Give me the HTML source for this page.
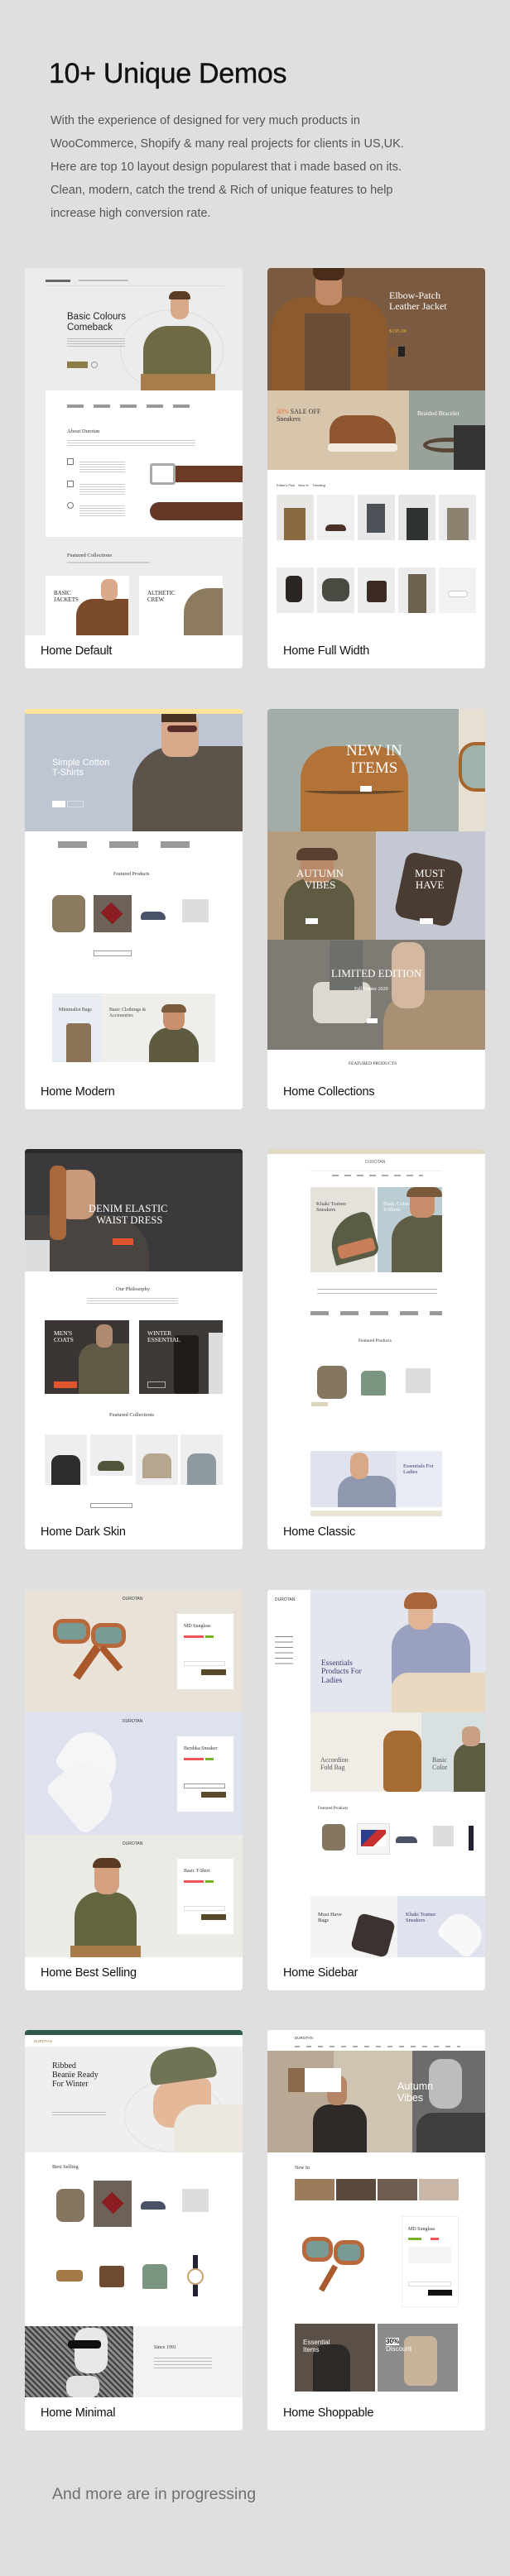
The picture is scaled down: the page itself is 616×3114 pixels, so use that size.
<!DOCTYPE html>
<html><head><meta charset="utf-8"><style>
*{margin:0;padding:0;box-sizing:border-box}
body{width:616px;height:3114px;background:#dfdfdf;font-family:"Liberation Sans",sans-serif;position:relative;overflow:hidden}
.h1{position:absolute;left:59px;top:70px;font-size:34px;color:#111;-webkit-text-stroke:0.4px #111;letter-spacing:-0.3px}
.p{position:absolute;left:61px;top:132px;font-size:14.5px;line-height:28px;color:#555;white-space:nowrap}
.more{position:absolute;left:63px;top:3004px;font-size:19.5px;color:#6f6f6f}
.card{position:absolute;width:263px;height:484px;background:#fff;border-radius:4px;overflow:hidden}
.shot{position:absolute;left:0;top:0;width:263px;height:444px;overflow:hidden}
.cap{position:absolute;left:19px;top:455px;font-size:14.5px;color:#111;letter-spacing:-0.2px}
i{position:absolute;display:block;font-style:normal}
.t{position:absolute;font-family:"Liberation Serif",serif;line-height:1.1;white-space:nowrap}
.s{position:absolute;font-size:4px;color:#999;white-space:nowrap}
</style></head><body>
<div class="h1">10+ Unique Demos</div>
<div class="p">With the experience of designed for very much products in<br>WooCommerce, Shopify &amp; many real projects for clients in US,UK.<br>Here are top 10 layout design popularest that i made based on its.<br>Clean, modern, catch the trend &amp; Rich of unique features to help<br>increase high conversion rate.</div>

<!-- Card 1 Home Default -->
<div class="card" style="left:30px;top:324px"><div class="shot" style="background:#ececec">
<i style="left:25px;top:14px;width:30px;height:3px;background:#666"></i>
<i style="left:65px;top:14px;width:60px;height:2px;background:#bbb"></i>
<i style="left:25px;top:21px;width:215px;height:1px;background:#ddd"></i>
<i style="left:115px;top:50px;width:125px;height:100px;border:1px solid #ddd;border-radius:50%"></i>
<i style="left:143px;top:70px;width:82px;height:78px;background:#6e6a44;border-radius:30px 30px 0 0"></i>
<i style="left:176px;top:30px;width:22px;height:32px;background:#d9a98a;border-radius:10px"></i>
<i style="left:174px;top:28px;width:26px;height:10px;background:#5a3b25;border-radius:8px 8px 2px 2px"></i>
<i style="left:140px;top:128px;width:90px;height:20px;background:#a77d4a"></i>
<div class="t" style="left:51px;top:53px;font-size:11.5px;color:#222;font-family:'Liberation Sans Narrow','Liberation Sans',sans-serif">Basic Colours<br>Comeback</div>
<i style="left:51px;top:83px;width:70px;height:12px;background:repeating-linear-gradient(#ececec 0 2px,#bbb 2px 3px)"></i>
<i style="left:51px;top:113px;width:25px;height:8px;background:#8a7d45"></i>
<i style="left:80px;top:113px;width:8px;height:8px;border:1px solid #999;border-radius:50%"></i>
<i style="left:25px;top:148px;width:238px;height:177px;background:#fff"></i>
<i style="left:51px;top:165px;width:160px;height:4px;background:repeating-linear-gradient(90deg,#999 0 20px,#fff 20px 32px)"></i>
<div class="t" style="left:51px;top:194px;font-size:6.5px;color:#333">About Durotan</div>
<i style="left:51px;top:206px;width:155px;height:10px;background:repeating-linear-gradient(#fff 0 2px,#ccc 2px 3px)"></i>
<i style="left:51px;top:230px;width:8px;height:8px;border:1px solid #777"></i>
<i style="left:51px;top:257px;width:8px;height:8px;border:1px solid #777"></i>
<i style="left:51px;top:283px;width:8px;height:8px;border:1px solid #777;border-radius:50%"></i>
<i style="left:66px;top:232px;width:55px;height:15px;background:repeating-linear-gradient(#fff 0 2px,#ccc 2px 3px)"></i>
<i style="left:66px;top:259px;width:55px;height:15px;background:repeating-linear-gradient(#fff 0 2px,#ccc 2px 3px)"></i>
<i style="left:66px;top:285px;width:55px;height:15px;background:repeating-linear-gradient(#fff 0 2px,#ccc 2px 3px)"></i>
<i style="left:151px;top:236px;width:31px;height:26px;border:3px solid #aaa;border-radius:3px"></i>
<i style="left:182px;top:239px;width:81px;height:20px;background:#6b3b26"></i>
<i style="left:151px;top:283px;width:112px;height:22px;background:#643727;border-radius:12px 0 0 12px"></i>
<div class="t" style="left:51px;top:344px;font-size:6.5px;color:#333">Featured Collections</div>
<i style="left:51px;top:355px;width:100px;height:2px;background:#ccc"></i>
<i style="left:25px;top:372px;width:101px;height:72px;background:#fff"></i>
<i style="left:138px;top:372px;width:101px;height:72px;background:#fff"></i>
<i style="left:62px;top:400px;width:63px;height:44px;background:#7a4a2b;border-radius:20px 0 0 0"></i>
<i style="left:92px;top:376px;width:20px;height:26px;background:#d9a98a;border-radius:8px"></i>
<i style="left:192px;top:387px;width:47px;height:57px;background:#8c7b5e;border-radius:30px 0 0 0"></i>
<div class="t" style="left:35px;top:390px;font-size:7px;color:#222">BASIC<br>JACKETS</div>
<div class="t" style="left:148px;top:390px;font-size:7px;color:#222">ALTHETIC<br>CREW</div>
</div><div class="cap">Home Default</div></div>

<!-- Card 2 Home Full Width -->
<div class="card" style="left:323px;top:324px"><div class="shot" style="background:#fff">
<i style="left:0;top:0;width:263px;height:148px;background:#7a5a40"></i>
<i style="left:5px;top:35px;width:140px;height:113px;background:#8b5a2e;border-radius:40px 40px 0 0"></i>
<i style="left:45px;top:55px;width:55px;height:93px;background:#6b4e38"></i>
<i style="left:58px;top:5px;width:32px;height:40px;background:#c08a66;border-radius:12px"></i>
<i style="left:55px;top:0;width:38px;height:15px;background:#4a2c1a;border-radius:0 0 10px 10px"></i>
<div class="t" style="left:147px;top:27px;font-size:12px;color:#fff">Elbow-Patch<br>Leather Jacket</div>
<div class="t" style="left:147px;top:73px;font-size:6.5px;color:#f2b233">$195.00</div>
<i style="left:147px;top:95px;width:8px;height:12px;background:#8b5a2e"></i>
<i style="left:158px;top:95px;width:8px;height:12px;background:#222"></i>
<i style="left:0;top:148px;width:171px;height:96px;background:#d8c6ac"></i>
<i style="left:171px;top:148px;width:92px;height:96px;background:#98a29a"></i>
<div class="t" style="left:11px;top:170px;font-size:8px;color:#333"><span style="color:#e8703a">30%</span> SALE OFF<br>Sneakers</div>
<i style="left:75px;top:178px;width:80px;height:40px;background:#8f5630;border-radius:20px 30px 6px 6px"></i>
<i style="left:73px;top:212px;width:84px;height:10px;background:#f2ece0;border-radius:4px"></i>
<div class="t" style="left:181px;top:172px;font-size:7.5px;color:#fff">Braided Bracelet</div>
<i style="left:188px;top:205px;width:60px;height:18px;border:5px solid #5a4636;border-radius:50%"></i>
<i style="left:225px;top:190px;width:38px;height:54px;background:#333"></i>
<div class="s" style="left:11px;top:260px;color:#333">Editor's Pick &nbsp;&nbsp; New In &nbsp;&nbsp; Trending</div>
<i style="left:11px;top:274px;width:45px;height:55px;background:#e8e6e2"></i>
<i style="left:60px;top:274px;width:45px;height:55px;background:#f0f0f0"></i>
<i style="left:109px;top:274px;width:45px;height:55px;background:#e8e8e8"></i>
<i style="left:158px;top:274px;width:45px;height:55px;background:#e6e6e6"></i>
<i style="left:207px;top:274px;width:45px;height:55px;background:#ebebeb"></i>
<i style="left:20px;top:290px;width:26px;height:39px;background:#8a6a3e"></i>
<i style="left:70px;top:310px;width:25px;height:8px;background:#4a3326;border-radius:6px 6px 2px 2px"></i>
<i style="left:120px;top:285px;width:22px;height:35px;background:#4d5258"></i>
<i style="left:168px;top:290px;width:26px;height:39px;background:#2e3330"></i>
<i style="left:217px;top:290px;width:26px;height:39px;background:#8d8270"></i>
<i style="left:11px;top:362px;width:45px;height:55px;background:#ececec"></i>
<i style="left:60px;top:362px;width:45px;height:55px;background:#ececec"></i>
<i style="left:109px;top:362px;width:45px;height:55px;background:#ececec"></i>
<i style="left:158px;top:362px;width:45px;height:55px;background:#ebebeb"></i>
<i style="left:207px;top:362px;width:45px;height:55px;background:#f2f2f2"></i>
<i style="left:22px;top:372px;width:20px;height:32px;background:#2a2522;border-radius:6px"></i>
<i style="left:66px;top:375px;width:33px;height:28px;background:#4b4a42;border-radius:10px"></i>
<i style="left:120px;top:378px;width:24px;height:26px;background:#3c2a24;border-radius:3px"></i>
<i style="left:170px;top:370px;width:22px;height:47px;background:#6f6150"></i>
<i style="left:218px;top:390px;width:24px;height:8px;background:#fff;border:1px solid #ccc;border-radius:4px"></i>
</div><div class="cap">Home Full Width</div></div>

<!-- Card 3 Home Modern -->
<div class="card" style="left:30px;top:857px"><div class="shot" style="background:#fff">
<i style="left:0;top:0;width:263px;height:6px;background:#fde49a"></i>
<i style="left:0;top:6px;width:263px;height:142px;background:#bfc6d3"></i>
<i style="left:130px;top:45px;width:133px;height:103px;background:#5c534b;border-radius:50px 0 0 0"></i>
<i style="left:165px;top:6px;width:45px;height:52px;background:#d8a88a;border-radius:12px"></i>
<i style="left:165px;top:6px;width:42px;height:10px;background:#4a3222"></i>
<i style="left:172px;top:20px;width:36px;height:8px;background:#5a2e28;border-radius:4px"></i>
<div class="t" style="left:33px;top:59px;font-size:11px;color:#fff;font-family:'Liberation Sans',sans-serif">Simple Cotton<br>T-Shirts</div>
<i style="left:33px;top:111px;width:16px;height:8px;background:#fff"></i>
<i style="left:51px;top:111px;width:20px;height:8px;border:1px solid #dde"></i>
<i style="left:40px;top:160px;width:180px;height:8px;background:repeating-linear-gradient(90deg,#999 0 35px,#fff 35px 62px)"></i>
<div class="t" style="left:107px;top:197px;font-size:6px;color:#333">Featured Products</div>
<i style="left:33px;top:225px;width:40px;height:45px;background:#8a7a60;border-radius:8px"></i>
<i style="left:83px;top:225px;width:46px;height:45px;background:#6d6158"></i>
<i style="left:95px;top:238px;width:20px;height:18px;background:#8a1c22;transform:rotate(45deg)"></i>
<i style="left:140px;top:245px;width:30px;height:10px;background:#4a5268;border-radius:6px 8px 2px 2px"></i>
<i style="left:190px;top:230px;width:32px;height:28px;background:#ddd"></i>
<i style="left:83px;top:292px;width:46px;height:7px;border:1px solid #999"></i>
<i style="left:33px;top:344px;width:61px;height:83px;background:#e8edf4"></i>
<i style="left:94px;top:344px;width:136px;height:83px;background:#efeeea"></i>
<i style="left:50px;top:380px;width:30px;height:47px;background:#8a7356;border-radius:4px 4px 0 0"></i>
<i style="left:150px;top:385px;width:60px;height:42px;background:#5d5a40;border-radius:25px 25px 0 0"></i>
<i style="left:167px;top:360px;width:26px;height:28px;background:#c8906c;border-radius:10px"></i>
<i style="left:165px;top:357px;width:30px;height:10px;background:#7a5a3a;border-radius:8px 8px 2px 2px"></i>
<div class="t" style="left:41px;top:361px;font-size:6px;color:#444">Minimalist Bags</div>
<div class="t" style="left:102px;top:361px;font-size:6px;color:#444">Basic Clothings &amp;<br>Accessories</div>
</div><div class="cap">Home Modern</div></div>

<!-- Card 4 Home Collections -->
<div class="card" style="left:323px;top:857px"><div class="shot" style="background:#fff">
<i style="left:0;top:0;width:231px;height:148px;background:#a3ada8"></i>
<i style="left:231px;top:0;width:32px;height:148px;background:#e6dfd2"></i>
<i style="left:231px;top:40px;width:32px;height:60px;border:4px solid #a7652c;border-right:none;border-radius:20px 0 0 20px;background:#9fb3ad"></i>
<i style="left:40px;top:45px;width:130px;height:103px;background:#b27238;border-radius:40px 40px 0 0"></i>
<i style="left:45px;top:95px;width:120px;height:8px;border-bottom:4px solid #6b4a2a;border-radius:50%"></i>
<div class="t" style="left:95px;top:41px;font-size:19px;color:#fff;text-align:center">NEW IN<br>ITEMS</div>
<i style="left:112px;top:93px;width:14px;height:7px;background:#fff"></i>
<i style="left:0;top:148px;width:131px;height:131px;background:#b59c7e"></i>
<i style="left:131px;top:148px;width:132px;height:131px;background:#c3c8d3"></i>
<i style="left:20px;top:205px;width:85px;height:74px;background:#5f5a42;border-radius:30px 30px 0 0"></i>
<i style="left:40px;top:170px;width:40px;height:40px;background:#b88a6a;border-radius:12px"></i>
<i style="left:35px;top:168px;width:50px;height:15px;background:#5a4030;border-radius:10px 10px 3px 3px"></i>
<i style="left:160px;top:178px;width:70px;height:80px;background:#4a3c33;border-radius:12px;transform:rotate(12deg)"></i>
<div class="t" style="left:35px;top:192px;font-size:13px;color:#fff;text-align:center">AUTUMN<br>VIBES</div>
<div class="t" style="left:178px;top:192px;font-size:13px;color:#fff;text-align:center">MUST<br>HAVE</div>
<i style="left:46px;top:253px;width:15px;height:7px;background:#fff"></i>
<i style="left:184px;top:253px;width:16px;height:7px;background:#fff"></i>
<i style="left:0;top:279px;width:263px;height:133px;background:#7e7b74"></i>
<i style="left:55px;top:330px;width:70px;height:50px;background:#ddd8d0;border-radius:10px"></i>
<i style="left:140px;top:340px;width:123px;height:72px;background:#a98f74;border-radius:40px 0 0 0"></i>
<i style="left:150px;top:282px;width:40px;height:80px;background:#d5b8a0;border-radius:15px"></i>
<i style="left:75px;top:280px;width:40px;height:60px;background:#6e6e6a"></i>
<div class="t" style="left:77px;top:313px;font-size:13px;color:#fff">LIMITED EDITION</div>
<div class="t" style="left:105px;top:336px;font-size:6px;color:#fff">Fall Winter 2020</div>
<i style="left:120px;top:374px;width:13px;height:6px;background:#fff"></i>
<div class="t" style="left:98px;top:426px;font-size:5.5px;color:#333">FEATURED PRODUCTS</div>
</div><div class="cap">Home Collections</div></div>

<!-- Card 5 Home Dark Skin -->
<div class="card" style="left:30px;top:1389px"><div class="shot" style="background:#fff">
<i style="left:0;top:0;width:263px;height:148px;background:#3a3a3c"></i>
<i style="left:0;top:0;width:263px;height:5px;background:#2a2a2a"></i>
<i style="left:0;top:80px;width:150px;height:68px;background:#4a4440;border-radius:0 50px 0 0"></i>
<i style="left:40px;top:25px;width:45px;height:60px;background:#c89a7a;border-radius:14px"></i>
<i style="left:30px;top:20px;width:20px;height:90px;background:#a8683a;border-radius:8px"></i>
<i style="left:0;top:110px;width:30px;height:38px;background:#ddd"></i>
<div class="t" style="left:77px;top:66px;font-size:12.5px;color:#fff;text-align:center">DENIM ELASTIC<br>&nbsp;WAIST DRESS</div>
<i style="left:106px;top:108px;width:25px;height:8px;background:#e0552e"></i>
<div class="t" style="left:110px;top:166px;font-size:6.5px;color:#333">Our Philosophy</div>
<i style="left:75px;top:178px;width:110px;height:9px;background:repeating-linear-gradient(#fff 0 2px,#ccc 2px 3px)"></i>
<i style="left:24px;top:207px;width:102px;height:89px;background:#3b3633"></i>
<i style="left:138px;top:207px;width:101px;height:89px;background:#3e3a37"></i>
<i style="left:65px;top:235px;width:61px;height:61px;background:#5e5a45;border-radius:20px 0 0 0"></i>
<i style="left:86px;top:212px;width:20px;height:28px;background:#b08a6e;border-radius:8px"></i>
<i style="left:180px;top:225px;width:30px;height:71px;background:#1f1c1a;border-radius:4px"></i>
<i style="left:222px;top:222px;width:17px;height:74px;background:#ddd"></i>
<div class="t" style="left:35px;top:219px;font-size:7.5px;color:#fff">MEN'S<br>COATS</div>
<div class="t" style="left:148px;top:219px;font-size:7.5px;color:#fff">WINTER<br>ESSENTIAL</div>
<i style="left:35px;top:281px;width:28px;height:8px;background:#e0552e"></i>
<i style="left:148px;top:281px;width:22px;height:8px;border:1px solid #aaa"></i>
<div class="t" style="left:102px;top:318px;font-size:6.5px;color:#333">Featured Collections</div>
<i style="left:24px;top:345px;width:51px;height:61px;background:#eee"></i>
<i style="left:79px;top:345px;width:51px;height:50px;background:#eee"></i>
<i style="left:134px;top:345px;width:51px;height:61px;background:#eee"></i>
<i style="left:188px;top:345px;width:51px;height:61px;background:#eee"></i>
<i style="left:32px;top:370px;width:35px;height:36px;background:#2c2c2c;border-radius:10px 10px 0 0"></i>
<i style="left:88px;top:377px;width:32px;height:12px;background:#4e5538;border-radius:8px 8px 3px 3px"></i>
<i style="left:142px;top:368px;width:35px;height:30px;background:#b6a68e;border-radius:10px 10px 0 0"></i>
<i style="left:196px;top:368px;width:35px;height:38px;background:#8f9aa0;border-radius:10px 10px 0 0"></i>
<i style="left:79px;top:428px;width:51px;height:6px;border:1px solid #999"></i>
</div><div class="cap">Home Dark Skin</div></div>

<!-- Card 6 Home Classic -->
<div class="card" style="left:323px;top:1389px"><div class="shot" style="background:#fff">
<i style="left:0;top:0;width:263px;height:6px;background:#e0d9c5"></i>
<div class="s" style="left:118px;top:13px;font-size:5px;color:#666">DUROTAN</div>
<i style="left:52px;top:26px;width:159px;height:1px;background:#eee"></i>
<i style="left:78px;top:31px;width:110px;height:2px;background:repeating-linear-gradient(90deg,#aaa 0 8px,#fff 8px 15px)"></i>
<i style="left:52px;top:46px;width:78px;height:103px;background:#e5e2dc"></i>
<i style="left:133px;top:46px;width:78px;height:103px;background:#b9cdd2"></i>
<i style="left:75px;top:80px;width:55px;height:55px;background:#5a5d45;border-radius:40px 10px 10px 0;transform:rotate(-15deg)"></i>
<i style="left:85px;top:112px;width:45px;height:16px;background:#c97e5a;border-radius:4px;transform:rotate(-15deg)"></i>
<i style="left:150px;top:80px;width:61px;height:69px;background:#5f5d45;border-radius:30px 0 0 0"></i>
<i style="left:172px;top:48px;width:30px;height:35px;background:#c88e6c;border-radius:10px"></i>
<i style="left:168px;top:46px;width:43px;height:12px;background:#7a5a3a;border-radius:12px 12px 2px 2px"></i>
<div class="t" style="left:59px;top:63px;font-size:6.5px;color:#444">Khaki Trainer<br>Sneakers</div>
<div class="t" style="left:140px;top:63px;font-size:6.5px;color:#fff">Basic Color<br>T-Shirts</div>
<i style="left:60px;top:165px;width:145px;height:14px;background:repeating-linear-gradient(#fff 0 4px,#bbb 4px 5px)"></i>
<i style="left:52px;top:196px;width:159px;height:5px;background:repeating-linear-gradient(90deg,#999 0 22px,#fff 22px 36px)"></i>
<div class="t" style="left:110px;top:229px;font-size:5.5px;color:#333">Featured Products</div>
<i style="left:60px;top:262px;width:36px;height:40px;background:#857660;border-radius:8px"></i>
<i style="left:113px;top:268px;width:30px;height:30px;background:#7a9680;border-radius:6px 6px 2px 2px"></i>
<i style="left:167px;top:265px;width:30px;height:30px;background:#ddd"></i>
<i style="left:53px;top:306px;width:20px;height:5px;background:#ddd3b8"></i>
<i style="left:52px;top:365px;width:104px;height:68px;background:#dfe3ee"></i>
<i style="left:156px;top:365px;width:55px;height:68px;background:#e8ebf4"></i>
<i style="left:85px;top:395px;width:70px;height:38px;background:#9098b0;border-radius:20px 20px 0 0"></i>
<i style="left:100px;top:367px;width:22px;height:32px;background:#d8a888;border-radius:10px"></i>
<div class="t" style="left:164px;top:380px;font-size:6.5px;color:#3a3a70">Essentials For<br>Ladies</div>
<i style="left:52px;top:437px;width:159px;height:7px;background:#ebe5d8"></i>
</div><div class="cap">Home Classic</div></div>

<!-- Card 7 Home Best Selling -->
<div class="card" style="left:30px;top:1922px"><div class="shot" style="background:#fff">
<i style="left:0;top:0;width:263px;height:148px;background:#e9e2d9"></i>
<i style="left:0;top:148px;width:263px;height:148px;background:#dde2ee"></i>
<i style="left:0;top:296px;width:263px;height:148px;background:#ebebe6"></i>
<div class="s" style="left:118px;top:8px;font-size:5px;color:#333">DUROTAN</div>
<div class="s" style="left:118px;top:156px;font-size:5px;color:#333">DUROTAN</div>
<div class="s" style="left:118px;top:304px;font-size:5px;color:#333">DUROTAN</div>
<i style="left:34px;top:35px;width:45px;height:30px;background:#7a9a96;border:5px solid #b7693c;border-radius:12px"></i>
<i style="left:80px;top:40px;width:42px;height:30px;background:#7a9a96;border:5px solid #b7693c;border-radius:12px"></i>
<i style="left:70px;top:65px;width:10px;height:45px;background:#a8582a;transform:rotate(35deg)"></i>
<i style="left:100px;top:65px;width:8px;height:35px;background:#a8582a;transform:rotate(-40deg)"></i>
<i style="left:184px;top:29px;width:68px;height:91px;background:#fff"></i>
<div class="t" style="left:192px;top:41px;font-size:6px;color:#333">MD Sunglass</div>
<i style="left:192px;top:55px;width:24px;height:3px;background:#e55"></i><i style="left:218px;top:55px;width:10px;height:3px;background:#7ab030"></i>
<i style="left:192px;top:86px;width:50px;height:6px;border:1px solid #ddd"></i>
<i style="left:213px;top:96px;width:30px;height:7px;background:#5a4a2a"></i>
<i style="left:45px;top:175px;width:70px;height:60px;background:#f6f6f6;border-radius:30px 40px 10px 10px;transform:rotate(35deg)"></i>
<i style="left:35px;top:215px;width:75px;height:65px;background:#f4f4f4;border-radius:30px 40px 10px 10px;transform:rotate(50deg)"></i>
<i style="left:184px;top:177px;width:68px;height:91px;background:#fff"></i>
<div class="t" style="left:192px;top:189px;font-size:6px;color:#333">Bershka Sneaker</div>
<i style="left:192px;top:203px;width:24px;height:3px;background:#e55"></i><i style="left:218px;top:203px;width:10px;height:3px;background:#7ab030"></i>
<i style="left:192px;top:234px;width:50px;height:6px;border:1px solid #999"></i>
<i style="left:213px;top:244px;width:30px;height:7px;background:#5a4a2a"></i>
<i style="left:60px;top:365px;width:75px;height:79px;background:#636540;border-radius:30px 30px 0 0"></i>
<i style="left:84px;top:326px;width:30px;height:42px;background:#d4a080;border-radius:12px"></i>
<i style="left:82px;top:324px;width:34px;height:12px;background:#5a3a24;border-radius:12px 12px 2px 2px"></i>
<i style="left:55px;top:430px;width:85px;height:14px;background:#a87a48"></i>
<i style="left:184px;top:325px;width:68px;height:91px;background:#fff"></i>
<div class="t" style="left:192px;top:337px;font-size:6px;color:#333">Basic T-Shirt</div>
<i style="left:192px;top:351px;width:24px;height:3px;background:#e55"></i><i style="left:218px;top:351px;width:10px;height:3px;background:#7ab030"></i>
<i style="left:192px;top:382px;width:50px;height:6px;border:1px solid #ddd"></i>
<i style="left:213px;top:392px;width:30px;height:7px;background:#5a4a2a"></i>
</div><div class="cap">Home Best Selling</div></div>

<!-- Card 8 Home Sidebar -->
<div class="card" style="left:323px;top:1922px"><div class="shot" style="background:#fff">
<div class="s" style="left:9px;top:9px;font-size:5px;color:#333">DUROTAN</div>
<i style="left:9px;top:52px;width:22px;height:40px;background:repeating-linear-gradient(#fff 0 4px,#888 4px 5px,#fff 5px 6.5px)"></i>
<i style="left:52px;top:0;width:211px;height:148px;background:#e3e5ef"></i>
<i style="left:150px;top:40px;width:95px;height:80px;background:#9aa0c0;border-radius:30px 30px 10px 10px"></i>
<i style="left:170px;top:8px;width:30px;height:40px;background:#e0b494;border-radius:12px"></i>
<i style="left:165px;top:3px;width:40px;height:20px;background:#a9653a;border-radius:14px 14px 4px 4px"></i>
<i style="left:150px;top:100px;width:113px;height:48px;background:#e8d8c0;border-radius:20px 0 0 0"></i>
<div class="t" style="left:65px;top:84px;font-size:9.5px;color:#3a3a70">Essentials<br>Products For<br>Ladies</div>
<i style="left:52px;top:148px;width:134px;height:96px;background:#f1ede6"></i>
<i style="left:186px;top:148px;width:77px;height:96px;background:#d8e0e1"></i>
<i style="left:140px;top:170px;width:46px;height:74px;background:#a76c34;border-radius:15px 15px 6px 6px"></i>
<i style="left:225px;top:185px;width:38px;height:59px;background:#5e5d42;border-radius:20px 0 0 0"></i>
<i style="left:235px;top:165px;width:22px;height:24px;background:#caa084;border-radius:8px"></i>
<div class="t" style="left:64px;top:202px;font-size:8px;color:#555">Accordion<br>Fold Bag</div>
<div class="t" style="left:199px;top:202px;font-size:8px;color:#555">Basic<br>Color</div>
<div class="t" style="left:61px;top:262px;font-size:5px;color:#333">Featured Products</div>
<i style="left:66px;top:283px;width:28px;height:32px;background:#857660;border-radius:6px"></i>
<i style="left:108px;top:282px;width:40px;height:38px;background:#f4f4f4;border:1px solid #ddd"></i>
<i style="left:113px;top:290px;width:30px;height:20px;background:linear-gradient(135deg,#2c3e8c 40%,#c83030 40% 70%,#fff 70%)"></i>
<i style="left:155px;top:298px;width:26px;height:8px;background:#4a5268;border-radius:6px 8px 2px 2px"></i>
<i style="left:200px;top:285px;width:25px;height:25px;background:#ddd"></i>
<i style="left:243px;top:285px;width:6px;height:30px;background:#223"></i>
<i style="left:52px;top:370px;width:105px;height:74px;background:#f3f3f3"></i>
<i style="left:157px;top:370px;width:106px;height:74px;background:#dfe3ee"></i>
<i style="left:105px;top:395px;width:45px;height:45px;background:#3c3330;border-radius:8px;transform:rotate(15deg)"></i>
<i style="left:210px;top:395px;width:50px;height:40px;background:#f8f8f8;border-radius:20px 20px 8px 8px;transform:rotate(40deg)"></i>
<div class="t" style="left:61px;top:389px;font-size:6.5px;color:#333">Must Have<br>Bags</div>
<div class="t" style="left:167px;top:389px;font-size:6.5px;color:#3a3a70">Khaki Trainer<br>Sneakers</div>
</div><div class="cap">Home Sidebar</div></div>

<!-- Card 9 Home Minimal -->
<div class="card" style="left:30px;top:2454px"><div class="shot" style="background:#fff">
<i style="left:0;top:0;width:263px;height:6px;background:#2f5a48"></i>
<div class="s" style="left:11px;top:11px;font-size:4.5px;color:#a08040">DUROTAN</div>
<i style="left:0;top:20px;width:263px;height:128px;background:#efefef"></i>
<i style="left:120px;top:60px;width:120px;height:88px;border:1px solid #e0e0e0;border-radius:50%"></i>
<i style="left:155px;top:58px;width:70px;height:60px;background:#e4b898;border-radius:30px 10px 30px 20px"></i>
<i style="left:180px;top:90px;width:83px;height:58px;background:#ece8e0;border-radius:30px 0 0 0"></i>
<i style="left:150px;top:22px;width:80px;height:40px;background:#6e7455;border-radius:30px 30px 6px 6px;transform:rotate(-8deg)"></i>
<div class="t" style="left:33px;top:38px;font-size:10px;color:#222">Ribbed<br>Beanie Ready<br>For Winter</div>
<i style="left:33px;top:97px;width:65px;height:8px;background:repeating-linear-gradient(#efefef 0 2px,#bbb 2px 3px)"></i>
<div class="t" style="left:33px;top:162px;font-size:6.5px;color:#333">Best Selling</div>
<i style="left:38px;top:192px;width:34px;height:40px;background:#857660;border-radius:8px"></i>
<i style="left:83px;top:182px;width:46px;height:56px;background:#6d6158"></i>
<i style="left:96px;top:200px;width:20px;height:18px;background:#8a1c22;transform:rotate(45deg)"></i>
<i style="left:140px;top:207px;width:30px;height:10px;background:#4a5268;border-radius:6px 8px 2px 2px"></i>
<i style="left:190px;top:192px;width:32px;height:28px;background:#ddd"></i>
<i style="left:38px;top:290px;width:32px;height:14px;background:#a57a46;border-radius:4px"></i>
<i style="left:90px;top:285px;width:30px;height:26px;background:#6e4a30;border-radius:3px"></i>
<i style="left:142px;top:283px;width:30px;height:30px;background:#7a9680;border-radius:6px 6px 2px 2px"></i>
<i style="left:203px;top:272px;width:6px;height:50px;background:#223"></i>
<i style="left:196px;top:288px;width:20px;height:20px;background:#fff;border:2px solid #c9a070;border-radius:50%"></i>
<i style="left:0;top:358px;width:131px;height:86px;background:repeating-linear-gradient(45deg,#3c3c3c 0 2px,#8a8a8a 2px 5px)"></i>
<i style="left:60px;top:360px;width:40px;height:55px;background:#e8e8e8;border-radius:15px"></i>
<i style="left:50px;top:418px;width:40px;height:26px;background:#e2e2e2;border-radius:10px"></i>
<i style="left:52px;top:375px;width:40px;height:10px;background:#111;border-radius:4px"></i>
<i style="left:131px;top:358px;width:132px;height:86px;background:#f2f2f2"></i>
<div class="t" style="left:156px;top:381px;font-size:6px;color:#333">Since 1991</div>
<i style="left:156px;top:393px;width:70px;height:16px;background:repeating-linear-gradient(#f2f2f2 0 3px,#bbb 3px 4px)"></i>
</div><div class="cap">Home Minimal</div></div>

<!-- Card 10 Home Shoppable -->
<div class="card" style="left:323px;top:2454px"><div class="shot" style="background:#fff">
<div class="s" style="left:33px;top:7px;font-size:4.5px;color:#333">DUROTAN</div>
<i style="left:33px;top:19px;width:200px;height:2px;background:repeating-linear-gradient(90deg,#aaa 0 6px,#fff 6px 14px)"></i>
<i style="left:0;top:25px;width:175px;height:123px;background:#b8a894"></i>
<i style="left:80px;top:25px;width:95px;height:123px;background:#cfc3b2"></i>
<i style="left:55px;top:90px;width:65px;height:58px;background:#2d2a28;border-radius:20px 20px 0 0"></i>
<i style="left:72px;top:55px;width:24px;height:36px;background:#b68466;border-radius:10px"></i>
<i style="left:175px;top:25px;width:88px;height:123px;background:#6c6c6c"></i>
<i style="left:195px;top:35px;width:40px;height:60px;background:#bdbdbd;border-radius:15px"></i>
<i style="left:180px;top:100px;width:83px;height:48px;background:#3e3e3e;border-radius:20px 0 0 0"></i>
<div class="t" style="left:157px;top:62px;font-size:12.5px;color:#fff;font-family:'Liberation Sans',sans-serif">Autumn<br>Vibes</div>
<i style="left:25px;top:46px;width:64px;height:29px;background:#fff"></i>
<i style="left:25px;top:46px;width:20px;height:29px;background:#8a6a4a"></i>
<div class="t" style="left:33px;top:164px;font-size:6px;color:#333">New In</div>
<i style="left:33px;top:180px;width:48px;height:26px;background:#9c7a5c"></i>
<i style="left:83px;top:180px;width:48px;height:26px;background:#5a4a3c"></i>
<i style="left:133px;top:180px;width:48px;height:26px;background:#6e5e50"></i>
<i style="left:183px;top:180px;width:48px;height:26px;background:#c9b6a6"></i>
<i style="left:42px;top:250px;width:37px;height:30px;background:#7a9a96;border:5px solid #b7693c;border-radius:12px"></i>
<i style="left:80px;top:254px;width:37px;height:30px;background:#7a9a96;border:5px solid #b7693c;border-radius:12px"></i>
<i style="left:70px;top:283px;width:7px;height:34px;background:#a8582a;transform:rotate(30deg)"></i>
<i style="left:162px;top:225px;width:69px;height:110px;border:1px solid #eee"></i>
<div class="t" style="left:170px;top:238px;font-size:6px;color:#333">MD Sunglass</div>
<i style="left:170px;top:251px;width:16px;height:3px;background:#7ab030"></i><i style="left:197px;top:251px;width:10px;height:3px;background:#e55"></i>
<i style="left:170px;top:262px;width:52px;height:20px;background:#f4f4f4"></i>
<i style="left:170px;top:304px;width:52px;height:6px;border:1px solid #ddd"></i>
<i style="left:194px;top:314px;width:29px;height:7px;background:#111"></i>
<i style="left:33px;top:355px;width:97px;height:82px;background:#5a5048"></i>
<i style="left:55px;top:380px;width:45px;height:57px;background:#2e2a28;border-radius:15px 15px 0 0"></i>
<i style="left:133px;top:355px;width:97px;height:82px;background:#8b8b8b"></i>
<i style="left:165px;top:370px;width:40px;height:60px;background:#c8b49a;border-radius:8px"></i>
<div class="t" style="left:43px;top:374px;font-size:8px;color:#fff;font-family:'Liberation Sans',sans-serif">Essential<br>Items</div>
<div class="t" style="left:143px;top:373px;font-size:8px;color:#fff;font-family:'Liberation Sans',sans-serif"><span style="background:#fff;color:#111;font-weight:bold">30%</span><br>Discount</div>
</div><div class="cap">Home Shoppable</div></div>

<div class="more">And more are in progressing</div>
</body></html>
